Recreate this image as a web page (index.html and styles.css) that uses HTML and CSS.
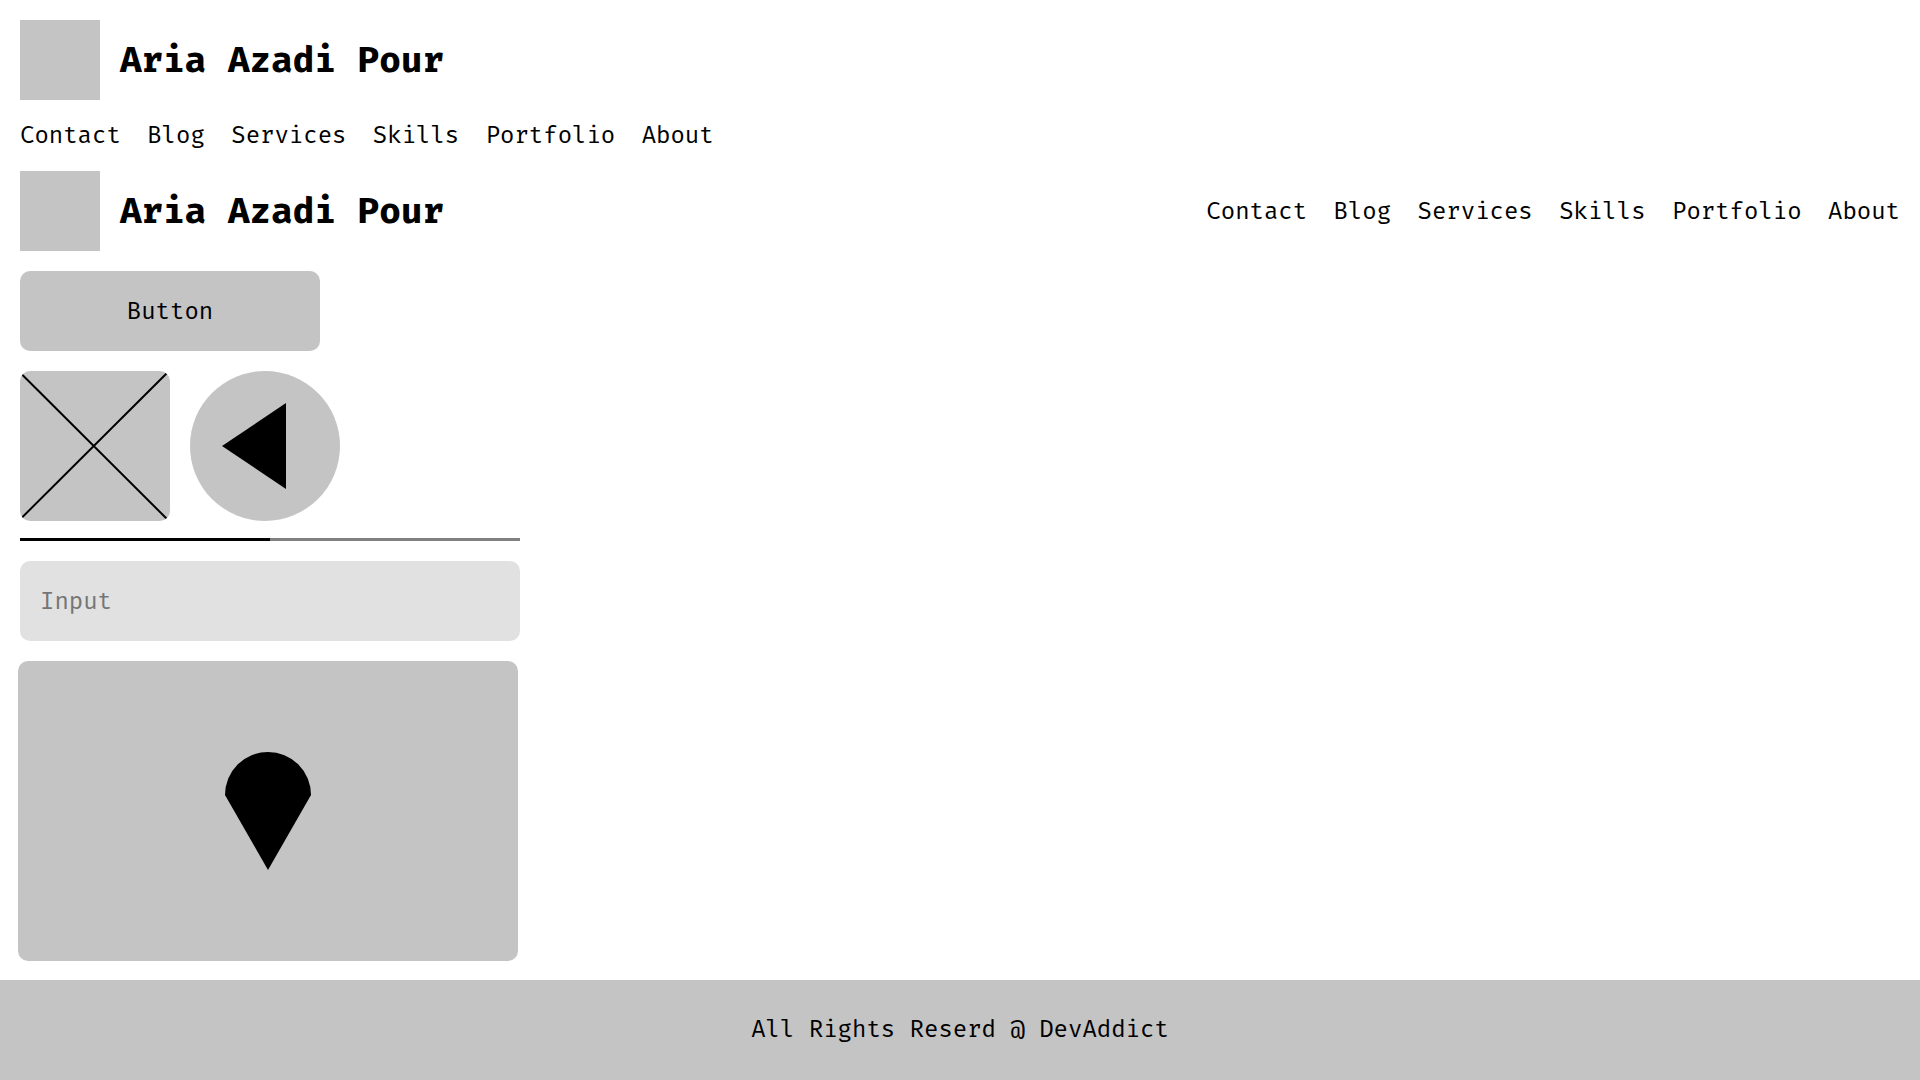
FILE: index.html
```html
<!DOCTYPE html>
<html lang="en">
<head>
  <meta charset="utf-8">
  <meta name="viewport" content="width=device-width, initial-scale=1">
  <title>Aria Azadi Pour</title>
  <link rel="stylesheet" href="styles.css">
</head>
<body>
  <header class="header header-stacked">
    <div class="brand">
      <div class="logo"></div>
      <h1 class="title">Aria Azadi Pour</h1>
    </div>
    <nav class="nav" aria-label="Primary">
      <a href="#">Contact</a>
      <a href="#">Blog</a>
      <a href="#">Services</a>
      <a href="#">Skills</a>
      <a href="#">Portfolio</a>
      <a href="#">About</a>
    </nav>
  </header>

  <header class="header header-inline">
    <div class="brand">
      <div class="logo"></div>
      <h2 class="title">Aria Azadi Pour</h2>
    </div>
    <nav class="nav" aria-label="Secondary">
      <a href="#">Contact</a>
      <a href="#">Blog</a>
      <a href="#">Services</a>
      <a href="#">Skills</a>
      <a href="#">Portfolio</a>
      <a href="#">About</a>
    </nav>
  </header>

  <main>
    <section class="controls">
      <button class="button" type="button">Button</button>
      <div class="media">
        <svg class="image" viewBox="0 0 150 150" role="img" aria-label="Image">
          <path d="M2 3.500 146.500 147.500M2 146.500 146.500 2.500" fill="none" stroke="#000" stroke-width="2"/>
        </svg>
        <button class="arrow" type="button" aria-label="Previous">
          <svg viewBox="0 0 150 150" aria-hidden="true"><path d="M32 75 96 32V118Z"/></svg>
        </button>
      </div>
    </section>

    <section class="fields">
      <progress class="progress" value="50" max="100" aria-label="Progress"></progress>
      <input class="input" type="text" placeholder="Input" aria-label="Input">
    </section>

    <section class="location">
      <div class="map">
        <svg class="pin" viewBox="0 0 86 118" role="img" aria-label="Location">
          <path d="M0 43A43 43 0 0 1 86 43L43 118Z"/>
        </svg>
      </div>
    </section>
  </main>

  <footer class="footer">All Rights Reserd @ DevAddict</footer>
</body>
</html>
```
FILE: styles.css
```css
* {
  box-sizing: border-box;
}

body {
  display: flex;
  flex-direction: column;
  min-height: 100vh;
  margin: 0;
  background: #fff;
  color: #000;
  font: 24px/31px "Fira Mono", "Liberation Mono", monospace;
}

.header {
  display: flex;
  gap: 20px;
  padding: 20px 20px 0;
}

.header-stacked {
  flex-direction: column;
}

.header-inline {
  align-items: center;
  justify-content: space-between;
}

.brand {
  display: flex;
  align-items: center;
  gap: 20px;
}

.logo {
  width: 80px;
  height: 80px;
  background: #c4c4c4;
}

.title {
  margin: 0;
  font-size: 36px;
  line-height: 48px;
}

.nav a {
  color: inherit;
  text-decoration: none;
}

.nav a + a {
  margin-left: 12px;
}

.controls {
  padding: 20px 20px 17px;
}

.button {
  display: block;
  width: 300px;
  height: 80px;
  padding: 0;
  border: 0;
  border-radius: 10px;
  background: #c4c4c4;
  color: inherit;
  font: inherit;
}

.media {
  display: flex;
  gap: 20px;
  margin-top: 20px;
}

.image {
  width: 150px;
  height: 150px;
  border-radius: 10px;
  background: #c4c4c4;
}

.arrow {
  width: 150px;
  height: 150px;
  padding: 0;
  border: 0;
  border-radius: 50%;
  background: #c4c4c4;
}

.arrow svg {
  display: block;
}

.fields {
  display: flex;
  flex-direction: column;
  gap: 20px;
  padding: 0 20px;
}

.progress {
  display: block;
  width: 100%;
  max-width: 500px;
  height: 3px;
  border: 0;
  background: #808080;
  appearance: none;
}

.progress::-webkit-progress-bar {
  background: #808080;
}

.progress::-webkit-progress-value {
  background: #000;
}

.progress::-moz-progress-bar {
  background: #000;
}

.input {
  width: 100%;
  max-width: 500px;
  height: 80px;
  padding: 0 20px;
  border: 0;
  border-radius: 10px;
  background: #e1e1e1;
  color: inherit;
  font: inherit;
}

.input::placeholder {
  color: #757575;
}

.location {
  padding: 20px 18px 18px;
}

.map {
  display: flex;
  align-items: center;
  justify-content: center;
  max-width: 500px;
  height: 300px;
  border-radius: 10px;
  background: #c4c4c4;
}

.pin {
  width: 86px;
  height: 118px;
}

.footer {
  margin-top: auto;
  padding: 34px 20px 35px;
  background: #c4c4c4;
  text-align: center;
}
```
